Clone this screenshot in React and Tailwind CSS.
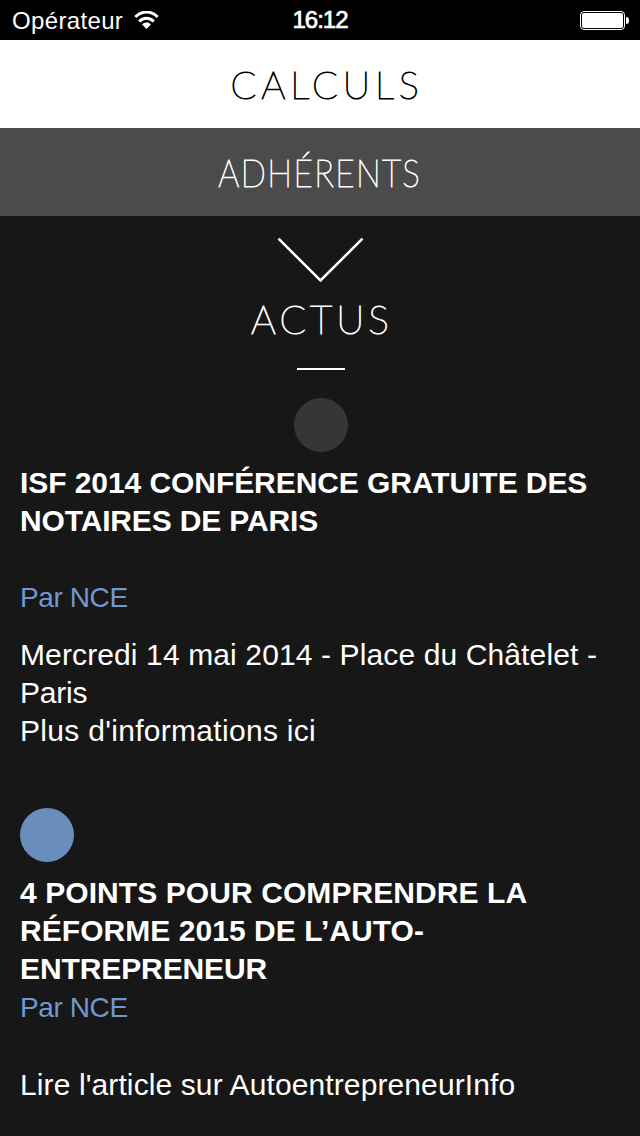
import React from 'react'

const StatusBar = () => (
  <div className="grid h-10 grid-cols-3 items-center bg-black pr-[11px] pl-3 text-white">
    <div className="flex items-center gap-[11px]">
      <span className="pt-px text-[24px] leading-[39px] tracking-[0.35px]">Opérateur</span>
      <svg className="h-[18px] w-[25px]" viewBox="0 0 25 18" fill="none">
        <path d="M1.3 6.1C7.7 -0.7 17.3 -0.7 23.7 6.1" stroke="white" strokeWidth="2.9" />
        <path d="M5.2 10.4C9.4 6.1 15.6 6.1 19.8 10.4" stroke="white" strokeWidth="2.9" />
        <path d="M8.1 13.4C10.6 11 14.4 11 16.9 13.4L12.5 18Z" fill="white" />
      </svg>
    </div>
    <span className="pr-px text-center text-[24px] leading-10 tracking-[-1px] [-webkit-text-stroke:0.7px_white]">16:12</span>
    <div className="flex items-center justify-end gap-px">
      <div className="h-[19px] w-[45px] rounded-[4px] border border-white p-px">
        <div className="h-full w-full rounded-[2px] bg-white" />
      </div>
      <div className="h-[7px] w-[3px] rounded-r-full bg-white" />
    </div>
  </div>
)

const Article = ({ children }) => <article className="flex flex-col px-5">{children}</article>

function App() {
  return (
    <div className="min-h-[1136px] w-[640px] overflow-hidden bg-[#171717] font-['Liberation_Sans',Arial,sans-serif] text-white antialiased">
      <StatusBar />

      {/* Collapsed sections */}
      <nav className="font-['Lato',sans-serif] text-[38px] font-thin">
        <div className="flex h-[88px] items-center justify-center bg-white pt-px pl-[14px] text-black">
          <span className="tracking-[4.8px] [-webkit-text-stroke:1.1px_black]">CALCULS</span>
        </div>
        <div className="flex h-[88px] items-center justify-center bg-[#4b4b4b] pt-px">
          <span className="scale-x-[0.87] tracking-[1.7px] [-webkit-text-stroke:1.1px_white]">ADHÉRENTS</span>
        </div>
      </nav>

      {/* Open section */}
      <header className="flex flex-col items-center pt-[21px]">
        <svg className="h-[47px] w-[88px]" viewBox="0 0 88 47" fill="none">
          <path d="M2.5 1.7L44.5 43.5L86.5 1.7" stroke="white" strokeWidth="2.6" />
        </svg>
        <h1 className="mt-[11px] pl-1 font-['Lato',sans-serif] text-[39px] leading-[48px] font-thin tracking-[4px] [-webkit-text-stroke:1.1px_white]">ACTUS</h1>
        <div className="mt-[25px] ml-[2px] h-[2px] w-12 bg-white" />
        <div className="mt-7 ml-[2px] h-[54px] w-[54px] rounded-full bg-[#363636]" />
      </header>

      <main className="mt-3 text-[30px] leading-[38px] whitespace-nowrap">
        <Article>
          <h2 className="flex flex-col font-bold">
            <span className="tracking-[-0.07px]">ISF 2014 CONFÉRENCE GRATUITE DES</span>
            <span className="tracking-[-0.15px]">NOTAIRES DE PARIS</span>
          </h2>
          <p className="mt-[39px] text-[28px] tracking-[-0.4px] text-[#7199d0]">Par NCE</p>
          <p className="mt-[19px] flex flex-col">
            <span className="tracking-[0.12px]">Mercredi 14 mai 2014 - Place du Châtelet -</span>
            <span className="tracking-[-0.2px]">Paris</span>
            <span className="tracking-[0.3px]">Plus d'informations ici</span>
          </p>
        </Article>

        <Article>
          <div className="mt-[58px] h-[54px] w-[54px] rounded-full bg-[#698ebc]" />
          <h2 className="mt-3 flex flex-col font-bold">
            <span className="tracking-[0.08px]">4 POINTS POUR COMPRENDRE LA</span>
            <span className="tracking-[0.05px]">RÉFORME 2015 DE L’AUTO-</span>
            <span className="tracking-[-0.1px]">ENTREPRENEUR</span>
          </h2>
          <p className="mt-px text-[28px] tracking-[-0.4px] text-[#7199d0]">Par NCE</p>
          <p className="mt-[39px] tracking-[0.11px]">Lire l'article sur AutoentrepreneurInfo</p>
        </Article>
      </main>
    </div>
  )
}

export default App
